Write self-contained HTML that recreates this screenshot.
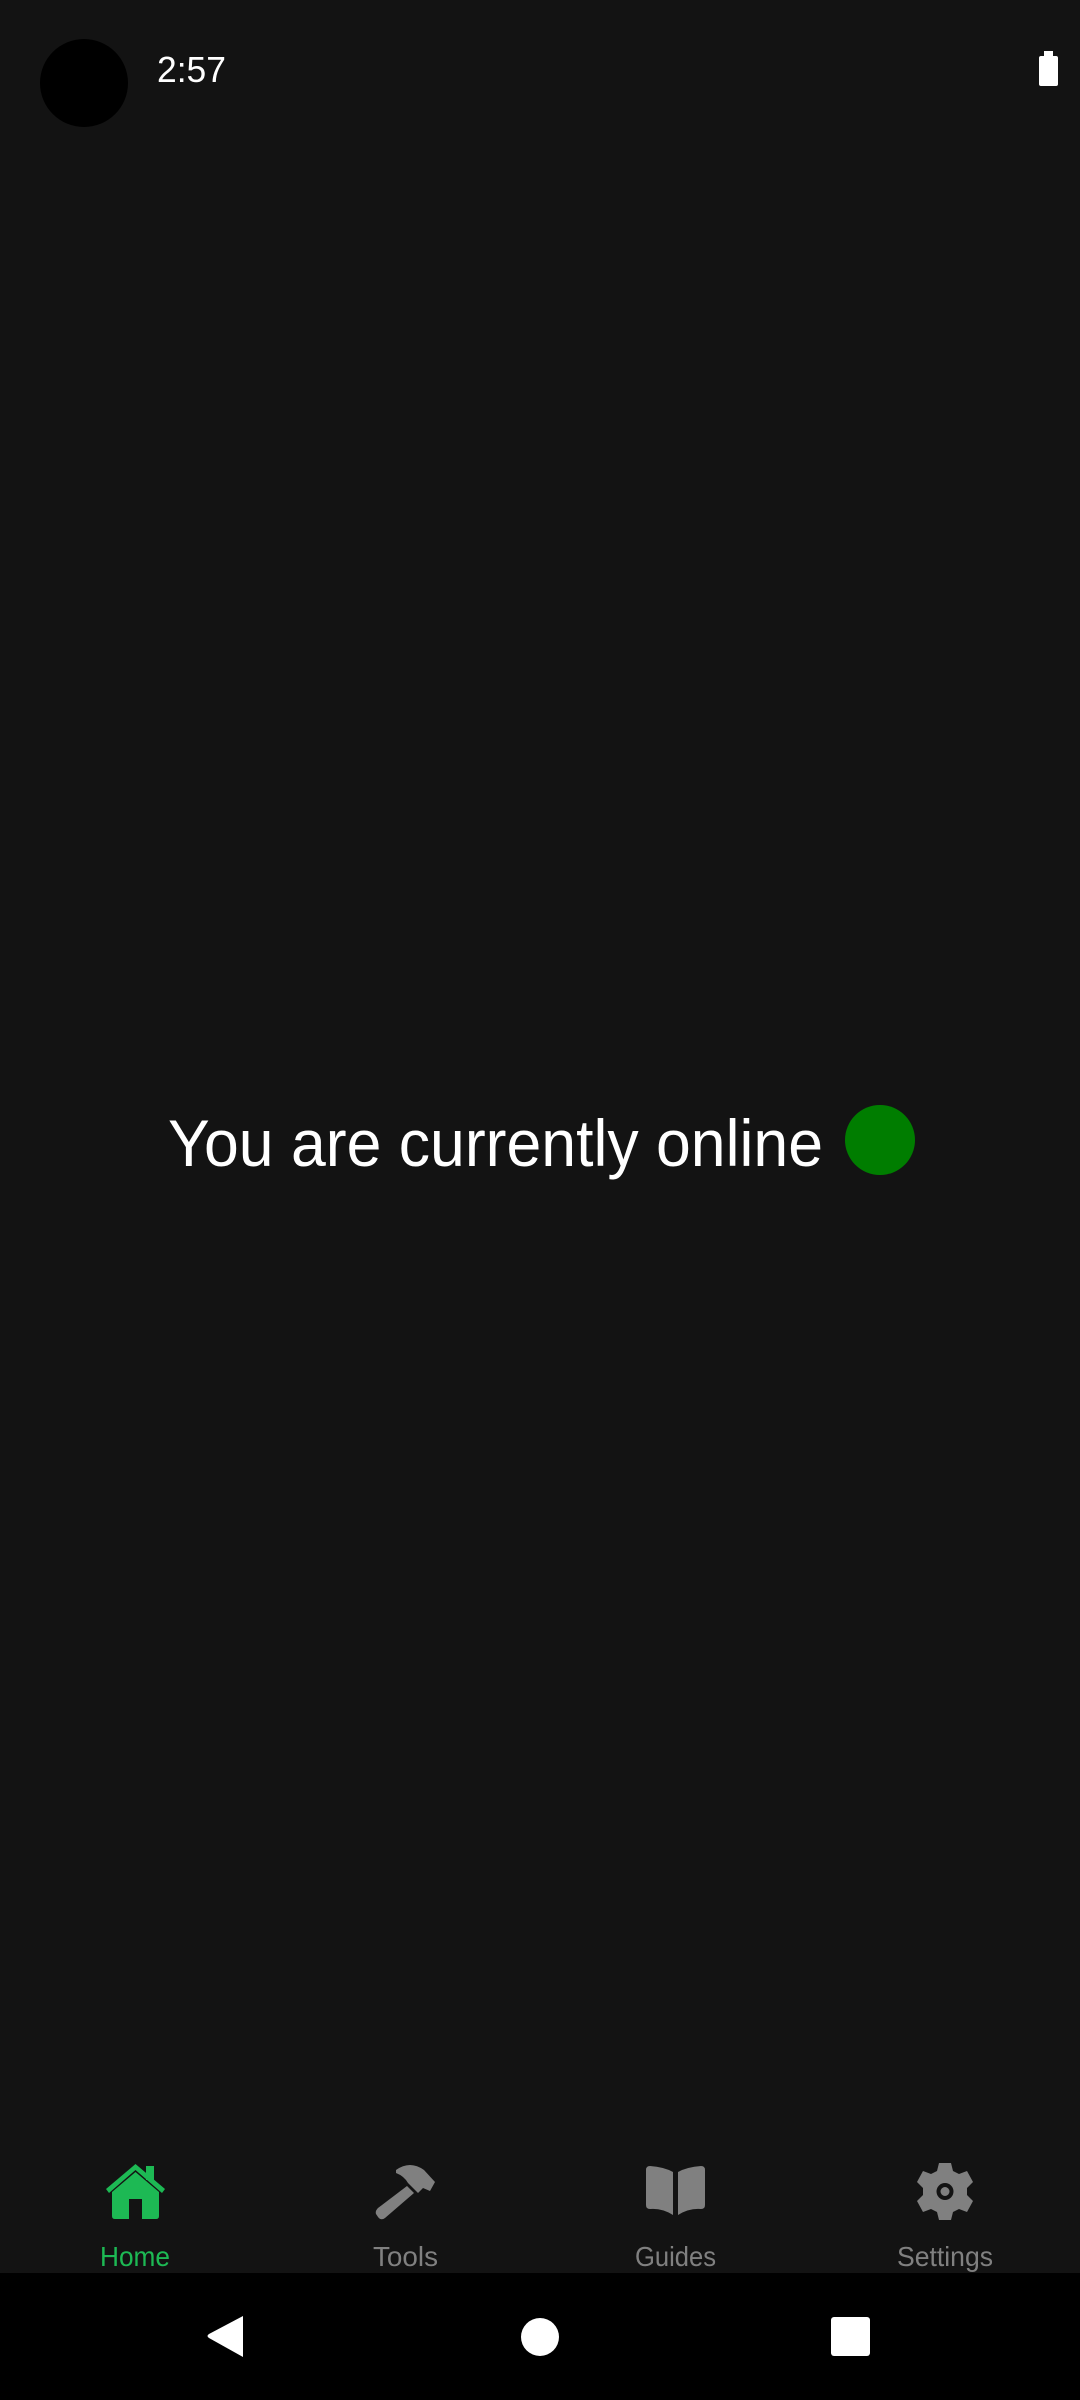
<!DOCTYPE html>
<html><head><meta charset="utf-8">
<style>
html,body{margin:0;padding:0;background:#131313;}
body{width:1080px;height:2400px;overflow:hidden;position:relative;}
svg{position:absolute;left:0;top:0;}
</style></head>
<body>
<svg width="1080" height="2400" viewBox="0 0 1080 2400" xmlns="http://www.w3.org/2000/svg">
<rect width="1080" height="2400" fill="#131313"/>
<!-- status bar -->
<ellipse cx="84" cy="83" rx="44" ry="44" fill="#000"/>
<text x="157" y="82" font-family="Liberation Sans, sans-serif" font-size="36" fill="#fff" textLength="69" lengthAdjust="spacingAndGlyphs">2:57</text>
<rect x="1039" y="56" width="19" height="30" rx="2" fill="#fff"/>
<rect x="1044" y="51" width="9" height="6" fill="#fff"/>
<!-- center -->
<text x="168" y="1166" font-family="Liberation Sans, sans-serif" font-size="66" fill="#fff" textLength="655" lengthAdjust="spacingAndGlyphs">You are currently online</text>
<circle cx="880" cy="1140" r="35" fill="#007d00"/>
<!-- bottom nav -->
<g fill="#1db954">
<path d="M106 2189 L135.5 2164 L165 2189 L162 2193 L135.5 2170 L109 2193 Z"/>
<rect x="146" y="2166" width="8" height="14"/>
<path d="M112 2192 L135.5 2172 L159 2192 L159 2216 Q159 2219 156 2219 L142 2219 L142 2199 L129 2199 L129 2219 L115 2219 Q112 2219 112 2216 Z"/>
</g>
<text x="100" y="2266" font-family="Liberation Sans, sans-serif" font-size="28" fill="#1db954" textLength="70" lengthAdjust="spacingAndGlyphs">Home</text>
<g fill="#808080">
<path d="M396 2170 Q410 2160 424 2170 L435 2182 L430 2191 L423 2188 L418 2193 L408 2183 Q404 2176 396 2173 Z"/>
<path d="M407 2186 L414 2193 L385 2218 Q381 2221 378 2217 L376 2214 Q375 2211 378 2208 Z"/>
<path d="M646 2170 Q646 2166 650 2166 Q664 2167 673 2172 L673 2215 Q662 2208 650 2209 Q646 2209 646 2205 Z"/>
<path d="M705 2170 Q705 2166 701 2166 Q687 2167 678 2172 L678 2215 Q689 2208 701 2209 Q705 2209 705 2205 Z"/>
<path fill-rule="evenodd" d="M939 2163 L951 2163 L953 2171 L959 2174 L967 2171 L973 2182 L967 2188 L967 2195 L973 2201 L967 2212 L959 2209 L953 2212 L951 2220 L939 2220 L937 2212 L931 2209 L923 2212 L917 2201 L923 2195 L923 2188 L917 2182 L923 2171 L931 2174 L937 2171 Z M945 2183 A8.5 8.5 0 1 0 945 2200 A8.5 8.5 0 1 0 945 2183 Z M945 2187 A4.5 4.5 0 1 1 945 2196 A4.5 4.5 0 1 1 945 2187 Z"/>
</g>
<text x="373" y="2266" font-family="Liberation Sans, sans-serif" font-size="28" fill="#808080" textLength="65" lengthAdjust="spacingAndGlyphs">Tools</text>
<text x="635" y="2266" font-family="Liberation Sans, sans-serif" font-size="28" fill="#808080" textLength="81" lengthAdjust="spacingAndGlyphs">Guides</text>
<text x="897" y="2266" font-family="Liberation Sans, sans-serif" font-size="28" fill="#808080" textLength="96" lengthAdjust="spacingAndGlyphs">Settings</text>
<!-- system nav -->
<rect x="0" y="2273" width="1080" height="127" fill="#000"/>
<path d="M243 2316 L243 2357 L209 2338 Q206 2336 209 2334 Z" fill="#fff"/>
<circle cx="540" cy="2337" r="19" fill="#fff"/>
<rect x="831" y="2317" width="39" height="39" rx="3" fill="#fff"/>
</svg>
</body></html>
